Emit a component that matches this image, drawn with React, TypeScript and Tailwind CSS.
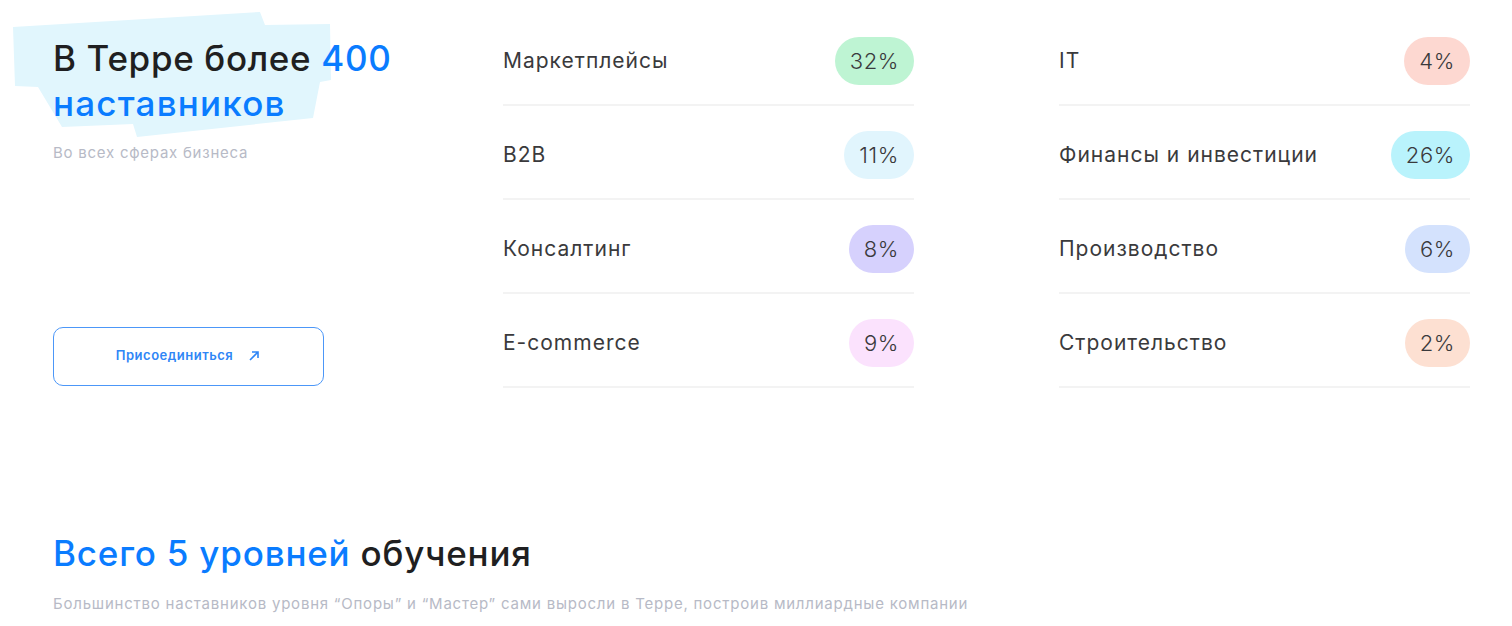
import React from "react";

const font = { fontFamily: "Inter, 'Noto Sans', sans-serif" };

const left = [
  { name: "Маркетплейсы", value: "32%", color: "bg-[#bef4d3]" },
  { name: "B2B", value: "11%", color: "bg-[#e1f5fd]" },
  { name: "Консалтинг", value: "8%", color: "bg-[#d6d1fd]" },
  { name: "E-commerce", value: "9%", color: "bg-[#fbe2fd]" },
];

const right = [
  { name: "IT", value: "4%", color: "bg-[#fdd8d1]" },
  { name: "Финансы и инвестиции", value: "26%", color: "bg-[#b9f3fc]" },
  { name: "Производство", value: "6%", color: "bg-[#d4e2fd]" },
  { name: "Строительство", value: "2%", color: "bg-[#fde0d2]" },
];

function Column({ items }: { items: typeof left }) {
  return (
    <div className="flex flex-col">
      {items.map((item) => (
        <div
          key={item.name}
          className="flex items-center justify-between pt-[25px] pb-[19px] border-b-2 border-[#f3f3f3]"
        >
          <span className="text-[21px] tracking-[1px] text-[#3a3a3c]">{item.name}</span>
          <span
            className={`${item.color} h-[48px] px-[15px] rounded-full flex items-center text-[22px] font-light tracking-[0.6px] text-[#3a3a3c]`}
          >
            {item.value}
          </span>
        </div>
      ))}
    </div>
  );
}

export default function App() {
  return (
    <div className="w-[1512px] h-[626px] bg-white overflow-hidden" style={font}>
      <div className="flex pl-[53px] pt-[12px]">
        {/* Left block */}
        <div className="w-[450px] shrink-0 flex flex-col">
          <div className="relative pt-[24px]">
            <svg
              className="absolute -left-[53px] -top-[12px]"
              width="340"
              height="150"
              viewBox="0 0 340 150"
            >
              <polygon
                points="13,27 260,12 265,25 330,24 331,80 320,82 313,118 137,137 133,124 62,127 38,87 15,86"
                fill="#e1f6fd"
              />
            </svg>
            <h2 className="relative text-[35px] leading-[45px] font-medium text-[#1f1f21] tracking-[0.65px]">
              В Терре более <span className="text-[#0a7cff]">400</span>
              <br />
              <span className="text-[#0a7cff] tracking-[1.2px]">наставников</span>
            </h2>
          </div>
          <p className="mt-[16px] text-[15px] tracking-[0.75px] text-[#b7bac6]">Во всех сферах бизнеса</p>
          <button className="mt-[162px] w-[271px] h-[59px] rounded-[10px] border-[1.5px] border-[#4c97f8] flex items-center justify-center gap-[14px] text-[13px] tracking-[0.5px] font-semibold text-[#2f86f6]">
            Присоединиться
            <svg width="14" height="14" viewBox="0 0 14 14" fill="none">
              <path d="M3 11L11 3M5 3h6v6" stroke="#2f86f6" strokeWidth="1.6" />
            </svg>
          </button>
        </div>
        {/* Middle column */}
        <div className="w-[411px] shrink-0">
          <Column items={left} />
        </div>
        <div className="w-[145px] shrink-0" />
        <div className="w-[411px] shrink-0">
          <Column items={right} />
        </div>
      </div>

      <div className="pl-[53px] mt-[143px]">
        <h2 className="text-[35px] leading-[45px] font-medium text-[#1f1f21] tracking-[0.8px]">
          <span className="text-[#0a7cff]">Всего 5 уровней</span> обучения
        </h2>
        <p className="mt-[17px] text-[15px] tracking-[0.78px] text-[#b7bac6]">
          Большинство наставников уровня “Опоры” и “Мастер” сами выросли в Терре, построив миллиардные компании
        </p>
      </div>
    </div>
  );
}
